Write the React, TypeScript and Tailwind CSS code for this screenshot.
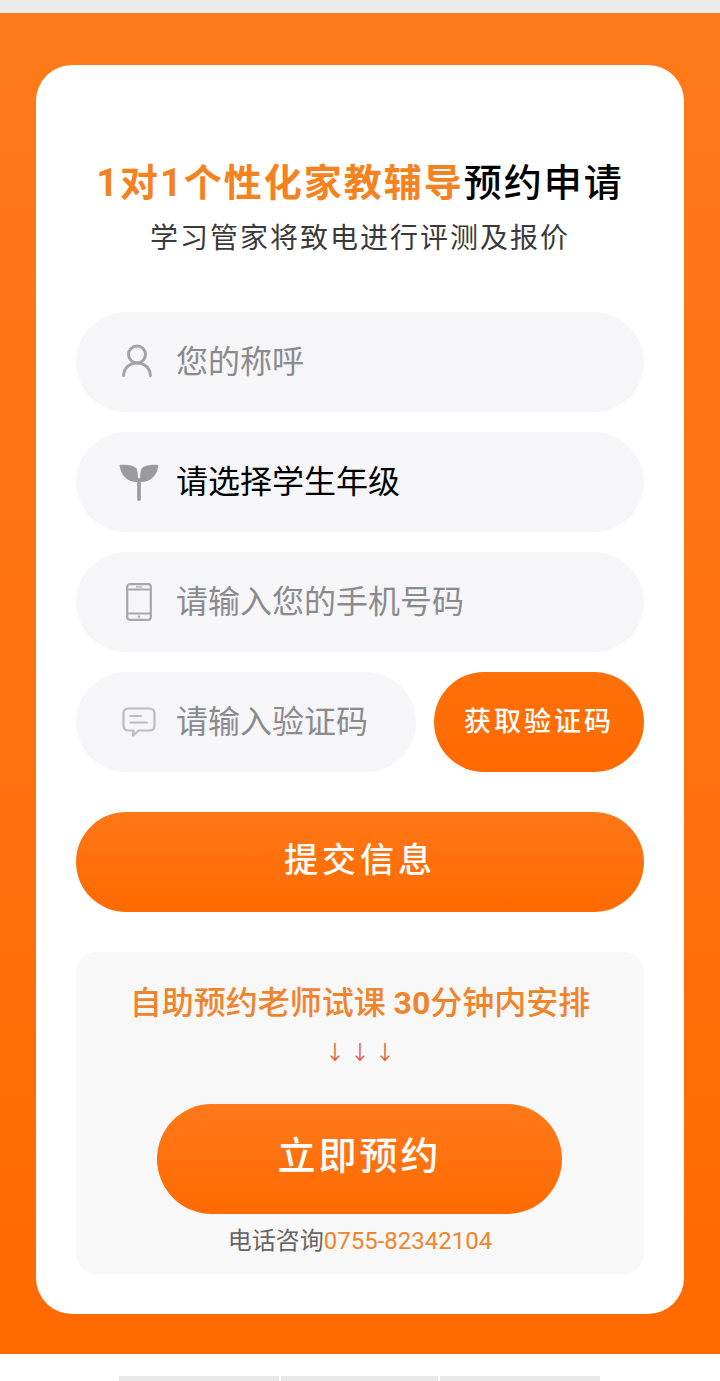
import React from 'react';

const FONT = "font-['Roboto','Noto_Sans_CJK_SC',sans-serif]";

const UserIcon = () => (
    <svg width="30" height="33" viewBox="0 0 30 33" fill="none" stroke="#a3a3a6" strokeWidth="3" strokeLinecap="round" className="mr-[4px] -mt-[3px]">
        <circle cx="15" cy="10.5" r="8.5" />
        <path d="M1.6 31.4 C2 24 7.5 19 15 19 C22.5 19 28 24 28.4 31.4" />
    </svg>
);

const SproutIcon = () => (
    <svg width="40" height="37" viewBox="0 0 40 37" fill="#9b9b9e">
        <path d="M0.5 1 C7 0 14 1 17 4 C18.5 6 19 10 19 18 C10 18.5 2 13 0.5 1 Z" />
        <path d="M39.5 1 C33 0 26 1 23 4 C21.5 6 21 10 21 18 C30 18.5 38 13 39.5 1 Z" />
        <rect x="18.2" y="14" width="3.6" height="23" rx="1.8" />
    </svg>
);

const PhoneIcon = () => (
    <svg width="26" height="38" viewBox="0 0 26 38" fill="none" stroke="#a8a8ab" strokeWidth="2.2">
        <rect x="1.2" y="1.2" width="23.6" height="35.6" rx="2.5" />
        <path d="M1.2 6.5 H24.8 M1.2 30.5 H24.8" />
        <path d="M10 3.9 H16" strokeWidth="1.2" />
        <circle cx="13" cy="33.7" r="1.3" fill="#a8a8ab" stroke="none" />
    </svg>
);

const ChatIcon = () => (
    <svg width="34" height="30" viewBox="0 0 34 30" fill="none" stroke="#bcbcc0" strokeWidth="2.2" strokeLinecap="round" strokeLinejoin="round">
        <path d="M6 1.5 H28 C30.5 1.5 32.5 3.5 32.5 6 V19 C32.5 21.5 30.5 23.5 28 23.5 H17 L11 28.5 L11.5 23.5 H6 C3.5 23.5 1.5 21.5 1.5 19 V6 C1.5 3.5 3.5 1.5 6 1.5 Z" />
        <path d="M8.5 9 H19 M8.5 15.5 H25" />
    </svg>
);

const Field = ({ icon, children, className = '' }: { icon: React.ReactNode; children: React.ReactNode; className?: string }) => (
    <div className={`flex h-[100px] items-center rounded-[50px] bg-[#f6f6f8] ${className}`}>
        <div className="flex w-[100px] shrink-0 items-center justify-center pl-[25px]">{icon}</div>
        {children}
    </div>
);

const inputClass = 'w-full min-w-0 bg-transparent text-[32px] leading-[46px] text-black outline-none placeholder:text-[#8b8b8e]';

export default function App() {
    return (
        <div className={`flex h-[1381px] w-[720px] flex-col overflow-hidden bg-white ${FONT}`}>
            <div className="h-[13px] shrink-0 bg-[#ececec]" />

            <div className="h-[1341px] shrink-0 bg-gradient-to-b from-[#ff7a1a] to-[#ff6a00] px-[36px] pt-[52px]">
                <div className="h-[1249px] rounded-[36px] bg-white px-[40px] pt-[92px]">
                    <h1 className="whitespace-nowrap text-center text-[38px] font-medium leading-[52px] tracking-[2px] text-black">
                        <span className="font-bold text-[#f58220]">1对1个性化家教辅导</span>预约申请
                    </h1>
                    <p className="mt-[10px] text-center text-[28px] leading-[40px] tracking-[2px] text-[#3a3a3a]">学习管家将致电进行评测及报价</p>

                    <div className="mt-[53px] flex flex-col gap-[20px]">
                        <Field icon={<UserIcon />}>
                            <input className={inputClass} placeholder="您的称呼" />
                        </Field>
                        <Field icon={<SproutIcon />}>
                            <span className="text-[32px] text-black">请选择学生年级</span>
                        </Field>
                        <Field icon={<PhoneIcon />}>
                            <input className={inputClass} placeholder="请输入您的手机号码" />
                        </Field>
                        <div className="flex gap-[18px]">
                            <Field icon={<ChatIcon />} className="w-[340px]">
                                <input className={inputClass} placeholder="请输入验证码" />
                            </Field>
                            <button className="h-[100px] w-[210px] rounded-[50px] bg-gradient-to-b from-[#ff7008] to-[#ff6a00] text-[27px] font-medium tracking-[3px] text-white">
                                获取验证码
                            </button>
                        </div>
                    </div>

                    <button className="mt-[40px] block h-[100px] w-full rounded-[50px] bg-gradient-to-b from-[#ff7716] to-[#ff6a00] pb-[4px] text-[34px] font-medium tracking-[4px] text-white">
                        提交信息
                    </button>

                    <div className="mt-[40px] flex h-[322px] flex-col items-center rounded-[20px] bg-[#f8f8f8] pt-[31px]">
                        <p className="text-[32px] font-medium leading-[40px] text-[#f0842c]">自助预约老师试课 <span className="font-bold">30</span>分钟内安排</p>
                        <div className="mt-[14px] flex h-[32px] items-center text-[20px] text-[#e2603a]">
                            <span className="w-[25px] text-center">↓</span>
                            <span className="w-[25px] text-center">↓</span>
                            <span className="w-[25px] text-center">↓</span>
                        </div>
                        <button className="mr-[1px] mt-[35px] h-[110px] w-[405px] rounded-[55px] bg-gradient-to-b from-[#ff7918] to-[#ff6a00] pb-[6px] text-[38px] font-medium tracking-[3px] text-white">
                            立即预约
                        </button>
                        <p className="mt-[11px] text-[24px] leading-[32px] text-[#666]">
                            电话咨询<span className="text-[#f0842c]">0755-82342104</span>
                        </p>
                    </div>
                </div>
            </div>

            <div className="flex flex-1 items-end justify-center gap-[2px] pr-[1px]">
                <div className="h-[5px] w-[160px] bg-[#e8e8e8]" />
                <div className="h-[5px] w-[157px] bg-[#e8e8e8]" />
                <div className="h-[5px] w-[160px] bg-[#e8e8e8]" />
            </div>
        </div>
    );
}
